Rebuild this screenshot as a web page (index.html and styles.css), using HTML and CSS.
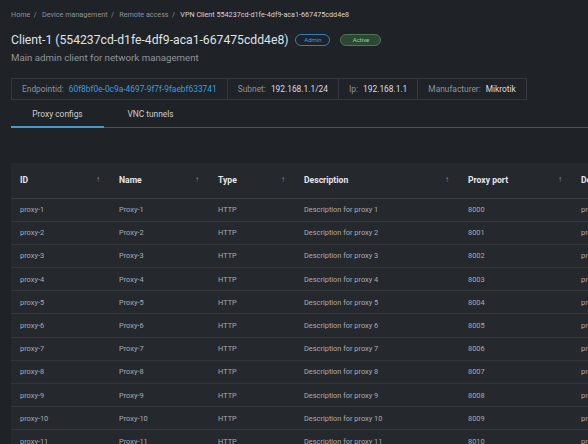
FILE: index.html
```html
<!DOCTYPE html>
<html lang="en">
<head>
    <meta charset="UTF-8">
    <meta name="viewport" content="width=device-width, initial-scale=1.0">
    <title>VPN Client</title>
    <link rel="stylesheet" href="styles.css">
</head>
<body>
    <!-- Header -->
    <header class="page-header">
        <nav class="breadcrumb">
            <span>Home</span><span class="sep">/</span>
            <span>Device management</span><span class="sep">/</span>
            <span>Remote access</span><span class="sep">/</span>
            <span class="current">VPN Client 554237cd-d1fe-4df9-aca1-667475cdd4e8</span>
        </nav>

        <div class="title-row">
            <h1>Client-1 (554237cd-d1fe-4df9-aca1-667475cdd4e8)</h1>
            <span class="badge badge-admin">Admin</span>
            <span class="badge badge-active">Active</span>
        </div>
        <p class="subtitle">Main admin client for network management</p>

        <div class="info-box">
            <div class="info-cell"><span class="label">Endpointid:</span><span class="value link">60f8bf0e-0c9a-4697-9f7f-9faebf633741</span></div>
            <div class="info-cell"><span class="label">Subnet:</span><span class="value">192.168.1.1/24</span></div>
            <div class="info-cell"><span class="label">Ip:</span><span class="value">192.168.1.1</span></div>
            <div class="info-cell"><span class="label">Manufacturer:</span><span class="value">Mikrotik</span></div>
        </div>

        <div class="tabs">
            <button class="tab active">Proxy configs</button>
            <button class="tab">VNC tunnels</button>
        </div>
    </header>

    <!-- Tabel proxy -->
    <section class="table-wrap">
        <table class="proxy-table">
            <thead>
                <tr>
                    <th class="col-id">ID<span class="sort">&#8593;</span></th>
                    <th class="col-name">Name<span class="sort">&#8593;</span></th>
                    <th class="col-type">Type<span class="sort">&#8593;</span></th>
                    <th class="col-desc">Description<span class="sort">&#8593;</span></th>
                    <th class="col-port">Proxy port<span class="sort">&#8593;</span></th>
                    <th class="col-dest">Destination</th>
                </tr>
            </thead>
            <tbody id="proxy-rows"></tbody>
        </table>
    </section>

    <script>
        const rows = document.getElementById('proxy-rows');
        for (let i = 1; i <= 11; i++) {
            const tr = document.createElement('tr');
            tr.innerHTML = `
                <td>proxy-${i}</td>
                <td>Proxy-${i}</td>
                <td>HTTP</td>
                <td>Description for proxy ${i}</td>
                <td>${7999 + i}</td>
                <td>proxy-${i}.local</td>
            `;
            rows.appendChild(tr);
        }
    </script>
</body>
</html>
```

FILE: styles.css
```css
* {
    margin: 0;
    padding: 0;
    box-sizing: border-box;
}

body {
    font-family: Roboto, 'Liberation Sans', sans-serif;
    background-color: #1f2227;
    color: #d6d9dd;
    width: 588px;
    height: 444px;
    overflow: hidden;
}

/* Header */
.page-header {
    padding: 10px 0 0 11px;
}

.breadcrumb {
    font-size: 7.2px;
    color: #8d939a;
    line-height: 10px;
}

.breadcrumb .sep {
    margin: 0 3.5px;
}

.breadcrumb .current {
    color: #d3d6da;
}

.title-row {
    display: flex;
    align-items: center;
    margin-top: 12px;
    height: 16px;
}

.title-row h1 {
    font-size: 12.2px;
    font-weight: 400;
    color: #dfe2e6;
    margin-right: 7px;
}

.badge {
    font-size: 6px;
    line-height: 10px;
    height: 12px;
    border-radius: 6px;
    margin-right: 10px;
    text-align: center;
}

.badge-admin {
    width: 35px;
    color: #3c9be0;
    border: 1px solid #2f7fbf;
}

.badge-active {
    width: 41px;
    color: #8fd69a;
    background: #2e4634;
    border: 1px solid #4c7656;
}

.subtitle {
    font-size: 9.7px;
    color: #8f959c;
    margin-top: 4px;
    line-height: 12px;
}

.info-box {
    display: inline-flex;
    margin-top: 14px;
    border: 1px solid #34383e;
    height: 22px;
}

.info-cell {
    display: flex;
    align-items: center;
    padding: 0 10px;
    font-size: 8.4px;
    border-left: 1px solid #34383e;
}

.info-cell:first-child {
    border-left: none;
}

.info-cell .label {
    color: #8d939a;
    margin-right: 5px;
}

.info-cell .value {
    color: #dadde1;
}

.info-cell .link {
    color: #3c9be0;
}

.tabs {
    display: flex;
    border-bottom: 1px solid #4b4f56;
    margin-top: 2px;
}

.tab {
    background: none;
    border: none;
    font-family: inherit;
    font-size: 8.4px;
    color: #c9ccd0;
    height: 26px;
    width: 93px;
    white-space: nowrap;
    text-align: center;
    border-bottom: 2px solid transparent;
    margin-bottom: -1px;
}

.tab.active {
    border-bottom-color: #3d9bd6;
}

/* Tabel */
.table-wrap {
    margin: 35px 0 0 11px;
    background: #25282d;
    overflow: hidden;
}

.proxy-table {
    border-collapse: collapse;
    table-layout: fixed;
    width: 700px;
    font-size: 7.4px;
}

.proxy-table th {
    text-align: left;
    font-size: 8.6px;
    font-weight: 700;
    color: #e3e6ea;
    height: 35px;
    padding: 0 10px 0 9px;
    border-bottom: 1px solid #3a3e44;
    white-space: nowrap;
    overflow: hidden;
}

.proxy-table th .sort {
    float: right;
    font-weight: 400;
    font-size: 8px;
    color: #8d939a;
}

.proxy-table td {
    height: 23.2px;
    padding: 0 10px 0 9px;
    color: #a7acb2;
    border-bottom: 1px solid #33373c;
    white-space: nowrap;
    overflow: hidden;
}

.col-id { width: 99px; }
.col-name { width: 99px; }
.col-type { width: 86px; }
.col-desc { width: 164px; }
.col-port { width: 113px; }
.col-dest { width: 139px; }
```
